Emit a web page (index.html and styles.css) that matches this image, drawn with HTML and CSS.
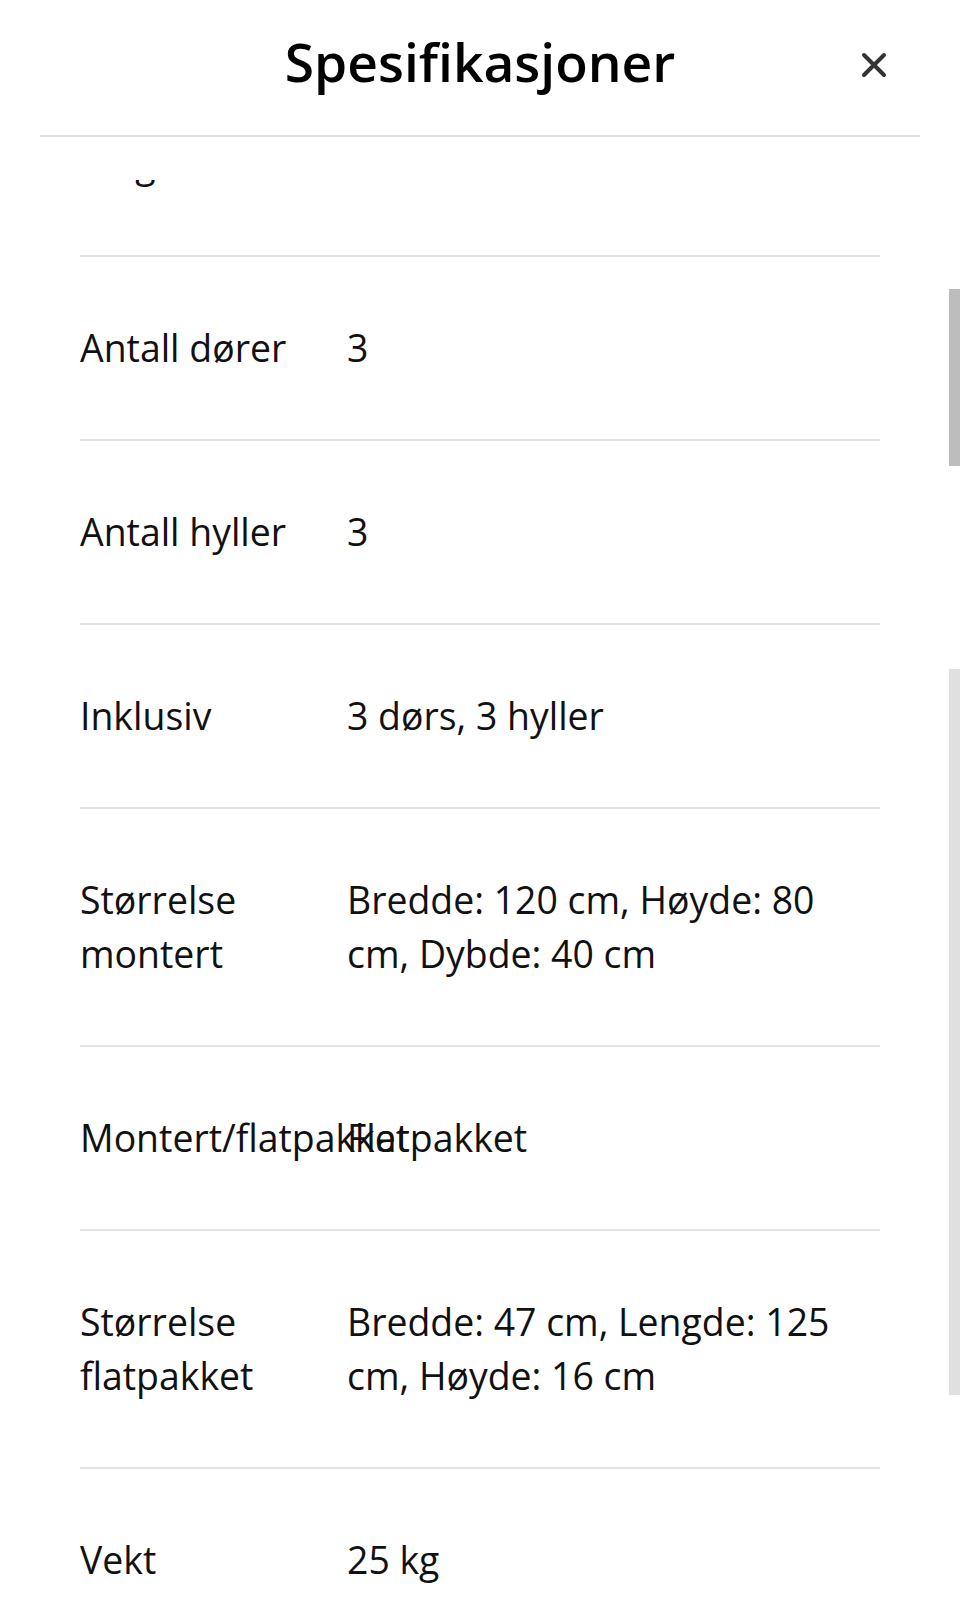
FILE: index.html
```html
<!DOCTYPE html>
<html lang="no">
<head>
  <meta charset="UTF-8">
  <meta name="viewport" content="width=device-width, initial-scale=1.0">
  <title>Spesifikasjoner</title>
  <link rel="stylesheet" href="styles.css">
</head>
<body>
  <div class="sheet">
    <!-- Header -->
    <header class="sheet-header">
      <h1>Spesifikasjoner</h1>
      <button class="close-btn" aria-label="Lukk">
        <svg viewBox="0 0 26 26" width="26" height="26">
          <path d="M3 3 L23 23 M23 3 L3 23" stroke="#333" stroke-width="4" stroke-linecap="round" fill="none"/>
        </svg>
      </button>
    </header>
    <div class="header-rule"></div>

    <!-- Spec list (scrolled) -->
    <div class="spec-viewport">
      <div class="spec-list">
        <div class="spec-row">
          <div class="spec-label">Farge</div>
          <div class="spec-value">Hvit</div>
        </div>
        <div class="spec-row">
          <div class="spec-label">Antall dører</div>
          <div class="spec-value">3</div>
        </div>
        <div class="spec-row">
          <div class="spec-label">Antall hyller</div>
          <div class="spec-value">3</div>
        </div>
        <div class="spec-row">
          <div class="spec-label">Inklusiv</div>
          <div class="spec-value">3 dørs, 3 hyller</div>
        </div>
        <div class="spec-row">
          <div class="spec-label">Størrelse montert</div>
          <div class="spec-value">Bredde: 120 cm, Høyde: 80 cm, Dybde: 40 cm</div>
        </div>
        <div class="spec-row">
          <div class="spec-label nowrap">Montert/flatpakket</div>
          <div class="spec-value">Flatpakket</div>
        </div>
        <div class="spec-row">
          <div class="spec-label">Størrelse flatpakket</div>
          <div class="spec-value">Bredde: 47 cm, Lengde: 125 cm, Høyde: 16 cm</div>
        </div>
        <div class="spec-row">
          <div class="spec-label">Vekt</div>
          <div class="spec-value">25 kg</div>
        </div>
      </div>
    </div>

    <!-- Scrollbar remnants -->
    <div class="scroll-thumb"></div>
    <div class="scroll-track"></div>
  </div>
</body>
</html>
```
FILE: styles.css
```css
/* Base */
* {
  box-sizing: border-box;
}

body {
  margin: 0;
  background: #ffffff;
  color: #111111;
  font-family: "Open Sans", "Noto Sans", sans-serif;
}

.sheet {
  position: relative;
  width: 960px;
  height: 1615px;
  overflow: hidden;
}

/* Header */
.sheet-header {
  position: relative;
  padding: 35px 0 47px;
  text-align: center;
}

.sheet-header h1 {
  margin: 0;
  font-size: 53.3px;
  line-height: 53px;
  font-weight: 600;
  color: #000000;
}

.close-btn {
  position: absolute;
  top: 52px;
  right: 73px;
  width: 26px;
  height: 26px;
  padding: 0;
  border: none;
  background: none;
  cursor: pointer;
}

.close-btn svg {
  display: block;
}

.header-rule {
  margin: 0 40px;
  height: 2px;
  background: #dedfe0;
}

/* Spec list */
.spec-viewport {
  margin-top: 43px;
  height: 1435px;
  overflow: hidden;
}

.spec-list {
  margin: -107px 80px 0;
}

.spec-row {
  display: grid;
  grid-template-columns: 267px 1fr;
  padding: 64px 0;
  border-bottom: 2px solid #e3e4e5;
  font-size: 37.4px;
  line-height: 54px;
}

.spec-label.nowrap {
  white-space: nowrap;
}

/* Scrollbar pieces on the right edge */
.scroll-thumb {
  position: absolute;
  top: 289px;
  right: 0;
  width: 11px;
  height: 177px;
  background: #bdbdbd;
}

.scroll-track {
  position: absolute;
  top: 669px;
  right: 0;
  width: 11px;
  height: 726px;
  background: #e0e0e0;
}
```
